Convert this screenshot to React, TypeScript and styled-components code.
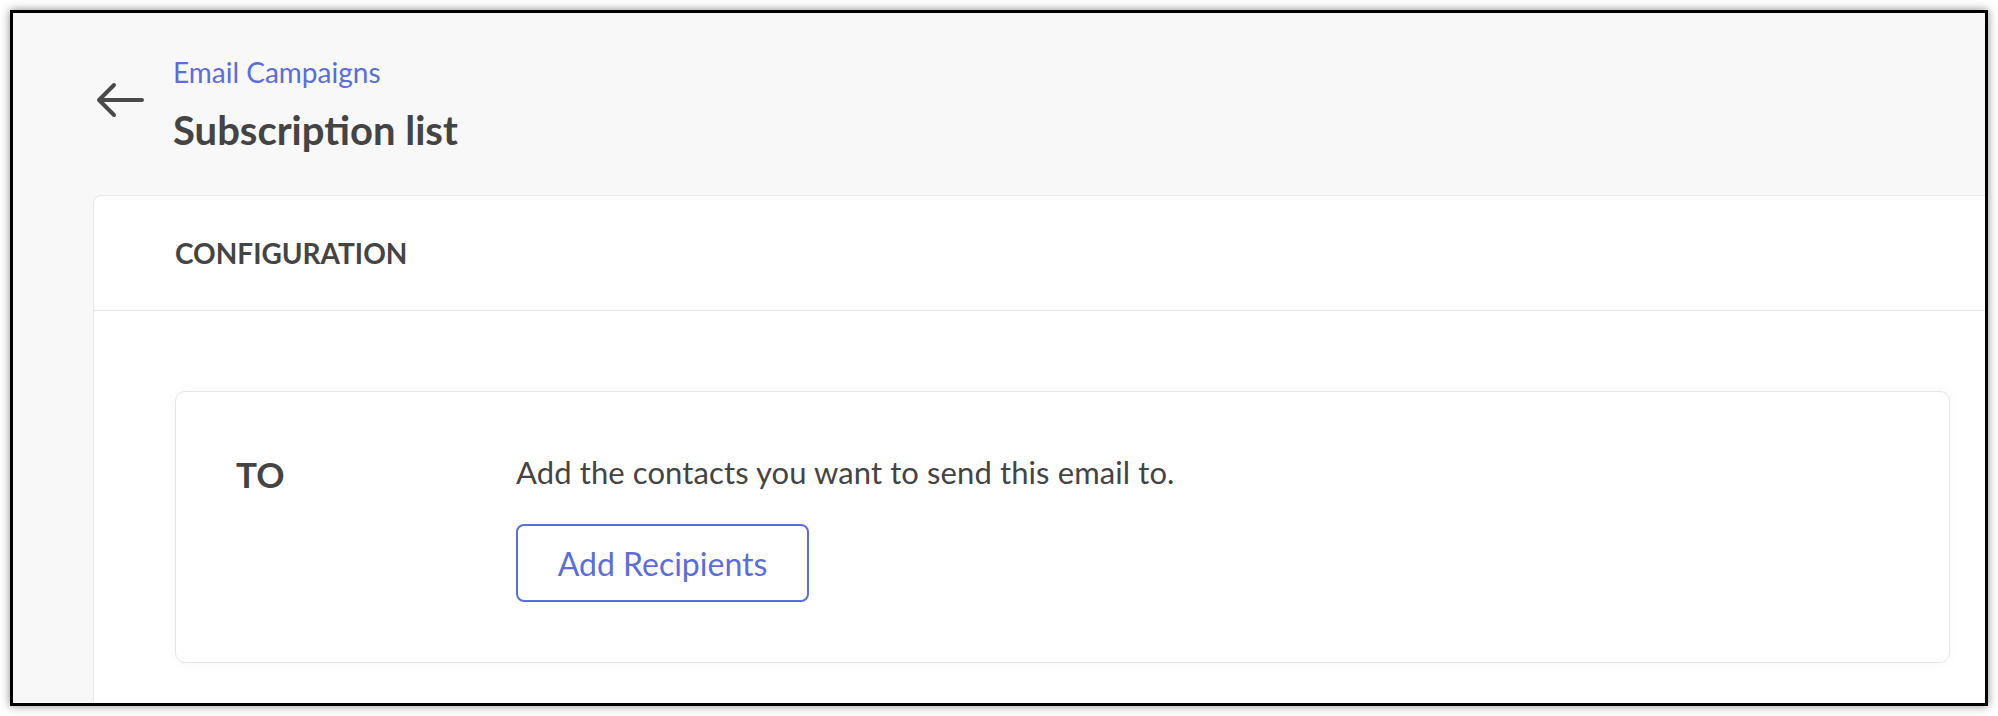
import styled, { createGlobalStyle } from 'styled-components';

const GlobalStyle = createGlobalStyle`
  html, body {
    margin: 0;
    padding: 0;
    background: #ffffff;
  }
  body {
    font-family: Lato, "Open Sans", "Liberation Sans", sans-serif;
    color: #444444;
  }
`;

const colors = {
  page: '#f8f8f8',
  text: '#444444',
  primary: '#5a6ddb',
  border: '#e6e6e6',
};

const Frame = styled.div`
  box-sizing: border-box;
  width: 1978px;
  height: 696px;
  margin: 10px;
  border: 3px solid #000000;
  box-shadow: 0 0 9px rgba(0, 0, 0, 0.45);
  background: ${colors.page};
  overflow: hidden;
`;

const Header = styled.header`
  display: flex;
  align-items: flex-start;
  gap: 27px;
  padding: 43px 0 0 82px;
`;

const BackButton = styled.button`
  border: none;
  background: none;
  padding: 0;
  width: 51px;
  height: 37px;
  margin-top: 25px;
  cursor: pointer;
  display: flex;
`;

const TitleBlock = styled.div`
  display: flex;
  flex-direction: column;
`;

const Breadcrumb = styled.a`
  font-size: 28px;
  line-height: 32px;
  color: ${colors.primary};
  text-decoration: none;
`;

const PageTitle = styled.h1`
  margin: 19px 0 0;
  font-size: 40px;
  line-height: 46px;
  font-weight: 700;
  color: ${colors.text};
`;

const Card = styled.section`
  margin: 42px 0 0 80px;
  width: 1939px;
  height: 600px;
  background: #ffffff;
  border: 1px solid ${colors.border};
  border-radius: 8px;
  box-sizing: border-box;
`;

const CardHeader = styled.div`
  display: flex;
  align-items: center;
  height: 114px;
  padding: 0 0 0 81px;
  border-bottom: 1px solid ${colors.border};
`;

const SectionTitle = styled.h2`
  margin: 0;
  font-size: 28px;
  font-weight: 700;
  color: ${colors.text};
`;

const CardBody = styled.div`
  padding: 80px 0 0 81px;
`;

const FieldBox = styled.div`
  box-sizing: border-box;
  width: 1775px;
  height: 272px;
  display: flex;
  align-items: flex-start;
  padding: 62px 0 0 60px;
  border: 1px solid ${colors.border};
  border-radius: 10px;
  box-shadow: 0 0 14px rgba(0, 0, 0, 0.035);
`;

const FieldLabel = styled.div`
  width: 280px;
  font-size: 35px;
  line-height: 40px;
  font-weight: 700;
  color: ${colors.text};
`;

const FieldContent = styled.div`
  display: flex;
  flex-direction: column;
  align-items: flex-start;
`;

const Hint = styled.p`
  margin: 0;
  font-size: 31px;
  line-height: 36px;
  letter-spacing: 0.1px;
  color: ${colors.text};
`;

const OutlineButton = styled.button`
  margin-top: 34px;
  width: 293px;
  height: 78px;
  border: 2px solid ${colors.primary};
  border-radius: 8px;
  background: #ffffff;
  color: ${colors.primary};
  font-family: Lato, "Open Sans", "Liberation Sans", sans-serif;
  font-size: 32px;
  cursor: pointer;
`;

function BackArrow() {
  return (
    <svg width="51" height="37" viewBox="0 0 51 37" fill="none">
      <path
        d="M4 19H47M19 4L4 19L19 34"
        stroke="#4a4a4a"
        strokeWidth="4"
        strokeLinecap="round"
        strokeLinejoin="round"
      />
    </svg>
  );
}

function App() {
  return (
    <>
      <GlobalStyle />
      <Frame>
        <Header>
          <BackButton aria-label="Back">
            <BackArrow />
          </BackButton>
          <TitleBlock>
            <Breadcrumb href="#">Email Campaigns</Breadcrumb>
            <PageTitle>Subscription list</PageTitle>
          </TitleBlock>
        </Header>
        <Card>
          <CardHeader>
            <SectionTitle>CONFIGURATION</SectionTitle>
          </CardHeader>
          <CardBody>
            <FieldBox>
              <FieldLabel>TO</FieldLabel>
              <FieldContent>
                <Hint>Add the contacts you want to send this email to.</Hint>
                <OutlineButton>Add Recipients</OutlineButton>
              </FieldContent>
            </FieldBox>
          </CardBody>
        </Card>
      </Frame>
    </>
  );
}

export default App;
